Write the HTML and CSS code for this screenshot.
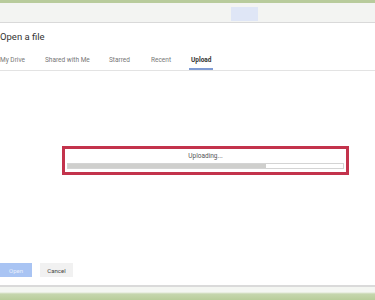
FILE: index.html
```html
<!DOCTYPE html>
<html lang="en">
<head>
    <meta charset="UTF-8">
    <meta name="viewport" content="width=device-width, initial-scale=1.0">
    <title>Open a file</title>
    <link rel="stylesheet" href="styles.css">
</head>
<body>
    <div class="topbar">
        <div class="topbar-btn"></div>
    </div>

    <div class="dialog">
        <h1 class="title">Open a file</h1>

        <div class="tabs">
            <span class="tab">My Drive</span>
            <span class="tab">Shared with Me</span>
            <span class="tab">Starred</span>
            <span class="tab">Recent</span>
            <span class="tab active">Upload</span>
        </div>

        <div class="content">
            <!-- Caixa de upload -->
            <div class="upload-box">
                <div class="upload-label">Uploading...</div>
                <div class="progress">
                    <div class="progress-fill" style="width: 72%"></div>
                </div>
            </div>
        </div>

        <div class="footer">
            <button class="btn btn-open">Open</button>
            <button class="btn btn-cancel">Cancel</button>
        </div>
    </div>

    <div class="bottombar"></div>
</body>
</html>
```

FILE: styles.css
```css
* {
    margin: 0;
    padding: 0;
    box-sizing: border-box;
}

body {
    font-family: Roboto, "Liberation Sans", sans-serif;
    background-color: #fff;
    width: 375px;
    height: 300px;
    overflow: hidden;
    color: #333;
}

.topbar {
    height: 23px;
    background-color: #f3f4f2;
    border-top: 3px solid #b8cb9c;
    border-bottom: 1px solid #d9d9d9;
    padding: 4px 0 0 231px;
}

.topbar-btn {
    width: 27px;
    height: 14px;
    background-color: #dfe6f6;
}

.dialog {
    height: 262px;
    display: flex;
    flex-direction: column;
    background-color: #fff;
}

.title {
    font-size: 9.5px;
    font-weight: normal;
    color: #333;
    height: 27px;
    padding-top: 7px;
    line-height: 14px;
}

.tabs {
    display: flex;
    height: 21px;
    border-bottom: 1px solid #e3e3e3;
    font-size: 6.5px;
    color: #777;
}

.tab {
    line-height: 18px;
    padding-top: 1px;
}

.tab:nth-child(1) { width: 45px; }
.tab:nth-child(2) { width: 64px; }
.tab:nth-child(3) { width: 42px; }
.tab:nth-child(4) { width: 38px; }

.tab.active {
    font-weight: bold;
    color: #333;
    padding-left: 2px;
    width: 24px;
    border-bottom: 2px solid #7f9bd3;
}

.content {
    flex: 1;
    padding: 75px 0 0 62px;
}

.upload-box {
    width: 287px;
    height: 29px;
    border: 3px solid #c3334c;
    padding: 2px 2px 0 2px;
    text-align: center;
}

.upload-label {
    font-size: 6.5px;
    color: #555;
    line-height: 10px;
    height: 12px;
}

.progress {
    height: 6px;
    border: 1px solid #d4d4d4;
    background-color: #fff;
}

.progress-fill {
    height: 100%;
    background-color: #cfcfcd;
}

.footer {
    display: flex;
    gap: 8px;
    padding: 0 0 8px 0;
    height: 22px;
}

.btn {
    font-family: Roboto, "Liberation Sans", sans-serif;
    font-size: 6px;
    border: none;
    height: 14px;
}

.btn-open {
    width: 32px;
    background-color: #a9c4f3;
    color: #e8effc;
}

.btn-cancel {
    width: 33px;
    background-color: #f1f1f1;
    color: #444;
}

.bottombar {
    height: 15px;
    border-top: 2px solid #dadada;
    background: linear-gradient(#f4f6f2 0, #f4f6f2 5px, #c6d6ae 7px, #b8cd9a 100%);
}
```
